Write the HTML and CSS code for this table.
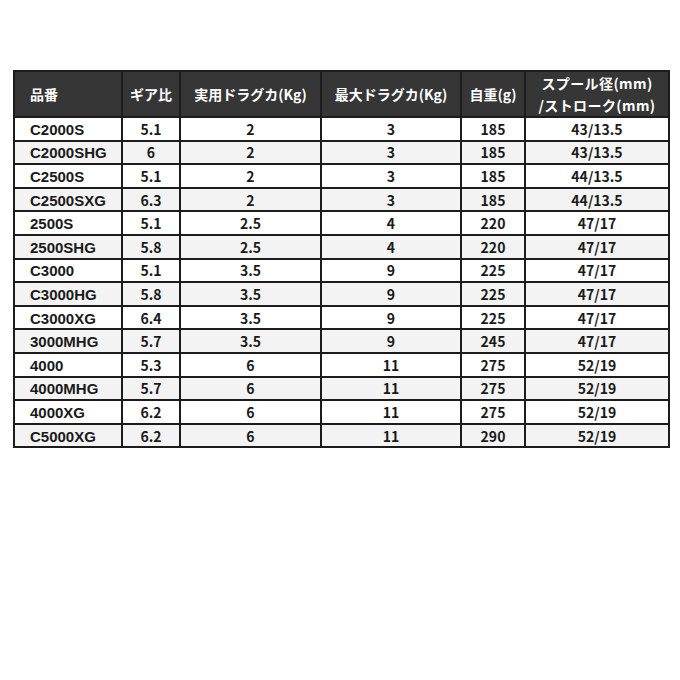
FILE: index.html
```html
<!DOCTYPE html>
<html lang="ja">
<head>
<meta charset="utf-8">
<link rel="stylesheet" href="styles.css">
</head>
<body>
<table class="spec">
  <colgroup>
    <col class="c1"><col class="c2"><col class="c3"><col class="c4"><col class="c5"><col class="c6">
  </colgroup>
  <thead>
    <tr>
      <th class="name">品番</th>
      <th>ギア比</th>
      <th>実用ドラグカ(Kg)</th>
      <th>最大ドラグカ(Kg)</th>
      <th>自重(g)</th>
      <th class="wide">スプール径(mm)<br>/ストローク(mm)</th>
    </tr>
  </thead>
  <tbody>
    <tr><td class="name">C2000S</td><td>5.1</td><td>2</td><td>3</td><td>185</td><td>43/13.5</td></tr>
    <tr><td class="name">C2000SHG</td><td>6</td><td>2</td><td>3</td><td>185</td><td>43/13.5</td></tr>
    <tr><td class="name">C2500S</td><td>5.1</td><td>2</td><td>3</td><td>185</td><td>44/13.5</td></tr>
    <tr><td class="name">C2500SXG</td><td>6.3</td><td>2</td><td>3</td><td>185</td><td>44/13.5</td></tr>
    <tr><td class="name">2500S</td><td>5.1</td><td>2.5</td><td>4</td><td>220</td><td>47/17</td></tr>
    <tr><td class="name">2500SHG</td><td>5.8</td><td>2.5</td><td>4</td><td>220</td><td>47/17</td></tr>
    <tr><td class="name">C3000</td><td>5.1</td><td>3.5</td><td>9</td><td>225</td><td>47/17</td></tr>
    <tr><td class="name">C3000HG</td><td>5.8</td><td>3.5</td><td>9</td><td>225</td><td>47/17</td></tr>
    <tr><td class="name">C3000XG</td><td>6.4</td><td>3.5</td><td>9</td><td>225</td><td>47/17</td></tr>
    <tr><td class="name">3000MHG</td><td>5.7</td><td>3.5</td><td>9</td><td>245</td><td>47/17</td></tr>
    <tr><td class="name">4000</td><td>5.3</td><td>6</td><td>11</td><td>275</td><td>52/19</td></tr>
    <tr><td class="name">4000MHG</td><td>5.7</td><td>6</td><td>11</td><td>275</td><td>52/19</td></tr>
    <tr><td class="name">4000XG</td><td>6.2</td><td>6</td><td>11</td><td>275</td><td>52/19</td></tr>
    <tr><td class="name">C5000XG</td><td>6.2</td><td>6</td><td>11</td><td>290</td><td>52/19</td></tr>
  </tbody>
</table>
</body>
</html>
```
FILE: styles.css
```css
html, body {
  margin: 0;
  padding: 0;
  background: #ffffff;
}
body {
  padding: 70px 13px 0 13px;
  font-family: "Noto Sans CJK JP", sans-serif;
  font-weight: 700;
  color: #1a1a1a;
}
.spec {
  border-collapse: collapse;
  table-layout: fixed;
  width: 655px;
  font-size: 14px;
}
.c1 { width: 108px; }
.c2 { width: 58px; }
.c3 { width: 141px; }
.c4 { width: 140px; }
.c5 { width: 64px; }
.c6 { width: 144px; }
.spec th, .spec td {
  border: 2px solid #1c1c1c;
  text-align: center;
  padding: 0;
  overflow: hidden;
}
.spec th {
  background: #363636;
  color: #ffffff;
  height: 44px;
  font-size: 14px;
  line-height: 22px;
  font-weight: 700;
}
.spec th.wide {
  letter-spacing: 0.4px;
}
.spec td {
  height: 21.6px;
  line-height: 20px;
}
.spec tbody tr:nth-child(even) td {
  background: #f3f3f3;
}
.spec td.name {
  font-family: "Liberation Sans", "Noto Sans CJK JP", sans-serif;
  font-size: 15px;
  padding-top: 2px;
  height: 19.6px;
  line-height: 18px;
}
.spec .name {
  text-align: left;
  padding-left: 15px;
}
```
